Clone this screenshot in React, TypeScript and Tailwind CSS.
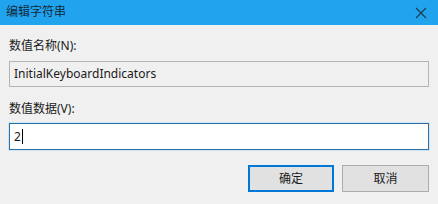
import React from 'react';

const font = { fontFamily: '"Noto Sans", "Noto Sans CJK SC", sans-serif' };

export default function App() {
    return (
        <div className="w-[438px] h-[204px] bg-[#f0f0f0] flex flex-col text-[12px] text-[#1a1a1a]" style={font}>
            {/* 标题栏 */}
            <div className="h-[25px] bg-[#22a3ee] flex items-center justify-between pl-[6px] pr-[8px]">
                <span className="text-[12px] leading-none text-[#0f2a3a] -mt-[1px]">编辑字符串</span>
                <svg width="12" height="12" viewBox="0 0 12 12" className="mr-[3px]">
                    <path d="M1 1 L11 11 M11 1 L1 11" stroke="#1a3a50" strokeWidth="1.1" />
                </svg>
            </div>

            {/* 内容 */}
            <div className="flex flex-col px-[9px] pt-[13px]">
                <label className="leading-[16px]">数值名称(N):</label>
                <div className="mt-[7px] h-[26px] border border-[#b4b4b4] bg-[#f0f0f0] flex items-center px-[4px]">
                    <span className="leading-none">InitialKeyboardIndicators</span>
                </div>

                <label className="mt-[14px] leading-[16px]">数值数据(V):</label>
                <div className="mt-[6px] h-[27px] border border-[#2f6ea3] bg-white flex items-center px-[4px] shadow-[0_0_0_1px_#cfe6f5]">
                    <span className="leading-none">2</span>
                    <span className="w-px h-[15px] bg-black ml-[1px]"></span>
                </div>

                {/* 按钮 */}
                <div className="flex justify-end gap-[8px] mt-[15px] pr-[0px]">
                    <button className="w-[86px] h-[27px] bg-[#e1e1e1] border-2 border-[#0078d7] text-[12px] leading-none" style={font}>确定</button>
                    <button className="w-[87px] h-[27px] bg-[#e1e1e1] border border-[#adadad] text-[12px] leading-none" style={font}>取消</button>
                </div>
            </div>
        </div>
    );
}
